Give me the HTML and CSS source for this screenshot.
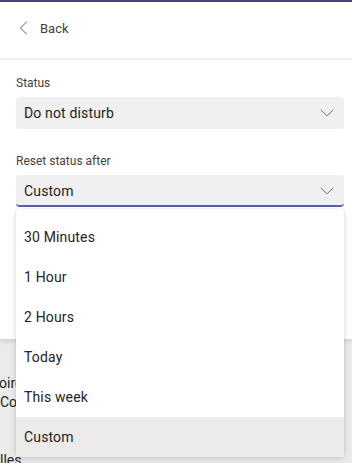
FILE: index.html
```html
<!DOCTYPE html>
<html lang="en">
<head>
<meta charset="utf-8">
<title>Status</title>
<link rel="stylesheet" href="styles.css">
</head>
<body>
<div class="page">
  <section class="panel">
    <div class="back-row">
      <svg class="back-icon" width="16" height="16" viewBox="0 0 16 16"><path d="M10.5 2 L4.5 8 L10.5 14" fill="none" stroke="#616161" stroke-width="1" stroke-linecap="round" stroke-linejoin="round"/></svg>
      <span class="back-text">Back</span>
    </div>
    <div class="divider"></div>
    <div class="form">
      <div class="field">
        <label class="label">Status</label>
        <div class="select">
          <span>Do not disturb</span>
          <svg class="chev" width="14" height="8" viewBox="0 0 14 8"><path d="M1 1.2 L7 6.8 L13 1.2" fill="none" stroke="#757575" stroke-width="1" stroke-linecap="round" stroke-linejoin="round"/></svg>
        </div>
      </div>
      <div class="field field-reset">
        <label class="label">Reset status after</label>
        <div class="select select-open">
          <span>Custom</span>
          <svg class="chev" width="14" height="8" viewBox="0 0 14 8"><path d="M1 1.2 L7 6.8 L13 1.2" fill="none" stroke="#757575" stroke-width="1" stroke-linecap="round" stroke-linejoin="round"/></svg>
        </div>
        <ul class="menu">
          <li class="item">30 Minutes</li>
          <li class="item">1 Hour</li>
          <li class="item">2 Hours</li>
          <li class="item">Today</li>
          <li class="item">This week</li>
          <li class="item item-active">Custom</li>
        </ul>
      </div>
    </div>
  </section>
  <div class="behind">
    <div class="behind-line l1">oire</div>
    <div class="behind-line l2">Cor</div>
    <div class="behind-line l3">lles</div>
  </div>
</div>
</body>
</html>
```
FILE: styles.css
```css
* { box-sizing: border-box; }
html, body { margin: 0; padding: 0; }
body {
  background: #ebebeb;
  font-family: Roboto, "Noto Sans", sans-serif;
  color: #242424;
  width: 352px;
  height: 463px;
  overflow: hidden;
}
.page { position: relative; }
.panel {
  background: #fff;
  border-top: 2px solid #464674;
  box-shadow: 0 2px 6px rgba(0,0,0,0.14);
  padding-bottom: 132px;
  position: relative;
  z-index: 1;
}
.back-row {
  height: 56px;
  display: flex;
  align-items: center;
  padding-left: 16px;
  padding-bottom: 4px;
  gap: 8px;
}
.back-icon { display: block; }
.back-text { font-size: 13px; color: #424242; }
.divider { height: 2px; background: #f0f0f0; }
.form { padding: 15px 8px 0 16px; }
.field { display: flex; flex-direction: column; gap: 6px; }
.field-reset { margin-top: 24px; position: relative; }
.label { font-size: 12px; line-height: 16px; color: #424242; }
.select {
  height: 32px;
  background: #f0f0f0;
  border-radius: 4px;
  display: flex;
  align-items: center;
  justify-content: space-between;
  padding: 0 10px 0 8px;
  font-size: 14px;
  letter-spacing: 0.15px;
  color: #242424;
}
.select-open {
  border-bottom: 2px solid #5b5fa6;
  padding-top: 2px;
}
.chev { display: block; }
.menu {
  position: absolute;
  left: 0;
  top: 56px;
  width: 328px;
  margin: 0;
  padding: 8px 0 0;
  list-style: none;
  background: #fff;
  border-radius: 4px;
  box-shadow: 0 2px 6px rgba(0,0,0,0.14), 0 0 2px rgba(0,0,0,0.1);
  z-index: 5;
}
.item {
  height: 40px;
  display: flex;
  align-items: center;
  padding-left: 8px;
  font-size: 14px;
  letter-spacing: 0.15px;
  color: #242424;
}
.item-active { background: #edebe9; }
.behind {
  padding-top: 35px;
  font-size: 14px;
  color: #242424;
  overflow: hidden;
}
.behind-line { line-height: 19px; white-space: nowrap; }
.l1 { margin-left: -1px; }
.l2 { margin-left: 0; }
.l3 { margin-left: 0; margin-top: 39px; }
```
